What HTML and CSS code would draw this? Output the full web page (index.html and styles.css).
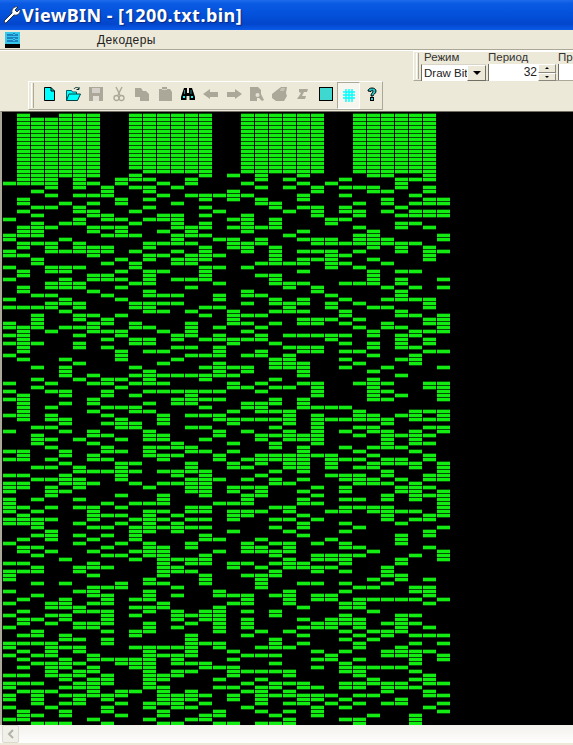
FILE: index.html
```html
<!DOCTYPE html>
<html lang="ru">
<head>
    <meta charset="UTF-8">
    <title>ViewBIN - [1200.txt.bin]</title>
    <link rel="stylesheet" href="styles.css">
</head>
<body>

<div class="titlebar">
    <svg class="app-icon" width="20" height="20" viewBox="0 0 20 20">
        <path d="M3 18 L2 16 L10 8 C9 4 12 1 16 2 L13 5 L15 7 L18 4 C19 8 16 11 12 10 L4 18 Z" fill="#fff" stroke="#26324a" stroke-width="1"/>
    </svg>
    <span>ViewBIN - [1200.txt.bin]</span>
</div>

<div class="menubar">
    <svg class="doc-icon" width="16" height="16" viewBox="0 0 16 16">
        <rect x="0" y="0" width="15" height="12" fill="#35c8e8"/>
        <rect x="0" y="12" width="15" height="4" fill="#000"/>
        <path d="M2 3 H8 M2 6 H8 M2 9 H8 M10 3 H13 M10 6 H13 M10 9 H13" stroke="#0a3a9a" stroke-width="1"/>
        <path d="M9 1 V11" stroke="#0a3a9a" stroke-width="1" stroke-dasharray="1 1"/>
    </svg>
    <a class="menu-item" href="#">Декодеры</a>
</div>

<div class="rebar">
    <div class="rebar-row rebar-row-right">
        <div class="band options-band">
            <div class="grip"></div>
            <div class="field mode-field">
                <label>Режим</label>
                <div class="combo">
                    <span class="combo-text">Draw Bit</span>
                    <span class="combo-btn"><i class="arrow-down"></i></span>
                </div>
            </div>
            <div class="field period-field">
                <label>Период</label>
                <div class="spin">
                    <span class="spin-value">32</span>
                    <span class="spin-btns">
                        <span class="spin-btn"><i class="tiny-up"></i></span>
                        <span class="spin-btn"><i class="tiny-down"></i></span>
                    </span>
                </div>
            </div>
            <div class="field next-field">
                <label>Пропуск</label>
                <div class="spin"></div>
            </div>
        </div>
    </div>
    <div class="rebar-row">
        <div class="band tools-band">
            <div class="grip"></div>

            <!-- new -->
            <button class="tool"><svg width="16" height="16" viewBox="0 0 16 16">
                <path d="M2.5 1.5 H9 L12.5 5 V14.5 H2.5 Z" fill="#0ff" stroke="#000"/>
                <path d="M9 1.5 V5 H12.5" fill="none" stroke="#000"/>
            </svg></button>
            <!-- open -->
            <button class="tool"><svg width="16" height="16" viewBox="0 0 16 16">
                <path d="M1.5 14.5 V4.5 H6.5 L7.5 6 H11.5 V8" fill="#0ff" stroke="#006060"/>
                <path d="M1.5 14.5 L4 8 H15.5 L12.5 14.5 Z" fill="#0ff" stroke="#004040"/>
                <path d="M9 3 C10 1 13 1 14 3 M14 1 V3.5 H11.5" fill="none" stroke="#003030"/>
            </svg></button>
            <!-- save -->
            <button class="tool"><svg width="16" height="16" viewBox="0 0 16 16">
                <path d="M1 1 H15 V15 H1 Z" fill="#aca899"/>
                <rect x="4" y="2" width="8" height="5" fill="#d4d0c8"/>
                <rect x="5" y="10" width="6" height="5" fill="#e2dfd4"/>
            </svg></button>
            <!-- cut -->
            <button class="tool"><svg width="16" height="16" viewBox="0 0 16 16">
                <path d="M5 1 L9 9 M11 1 L7 9" stroke="#aca899" stroke-width="1.4" fill="none"/>
                <circle cx="5.5" cy="12" r="2.5" fill="none" stroke="#aca899" stroke-width="1.3"/>
                <circle cx="10.5" cy="12" r="2.5" fill="none" stroke="#aca899" stroke-width="1.3"/>
            </svg></button>
            <!-- copy -->
            <button class="tool"><svg width="16" height="16" viewBox="0 0 16 16">
                <path d="M1 2 H7 L9 5 H12 L15 8 V15 H6 V11 H1 Z" fill="#aca899"/>
            </svg></button>
            <!-- paste -->
            <button class="tool"><svg width="16" height="16" viewBox="0 0 16 16">
                <path d="M2 3 H5 V1 H10 V3 H13 L15 6 V15 H2 Z" fill="#aca899"/>
                <rect x="5" y="3" width="5" height="1" fill="#d8d5c8"/>
            </svg></button>
            <!-- find -->
            <button class="tool"><svg width="16" height="16" viewBox="0 0 16 16">
                <path d="M4 2 H7 V7 H9 V2 H12 L15 11 V14 H9.5 V10 H6.5 V14 H1 V11 Z" fill="#000"/>
                <path d="M3 10 H5 V12 H3 Z M11 10 H13 V12 H11 Z" fill="#0ff"/>
                <path d="M4.5 4 V8 M11 4 V8" stroke="#2a8a8a"/>
            </svg></button>
            <!-- back -->
            <button class="tool"><svg width="16" height="16" viewBox="0 0 16 16">
                <path d="M0 8 L7 3 V6 H15 V11 H7 V13 Z" fill="#aca899"/>
            </svg></button>
            <!-- forward -->
            <button class="tool"><svg width="16" height="16" viewBox="0 0 16 16">
                <path d="M16 8 L9 3 V6 H1 V11 H9 V13 Z" fill="#aca899"/>
            </svg></button>
            <!-- preview -->
            <button class="tool"><svg width="16" height="16" viewBox="0 0 16 16">
                <path d="M1 1 H9 L12 4 V8 L15 14 L13 15 L10 12 H8 V15 H1 Z" fill="#aca899"/>
                <circle cx="8.5" cy="9" r="2" fill="#e6e3d6"/>
            </svg></button>
            <!-- print -->
            <button class="tool"><svg width="16" height="16" viewBox="0 0 16 16">
                <path d="M5 4 L9 1 H15 L14 7 L15 10 L12 15 H4 L0 12 V8 Z" fill="#aca899"/>
                <path d="M9 2 H13 L12 5 H8 Z" fill="#c6c3b4"/>
            </svg></button>
            <!-- sum -->
            <button class="tool"><svg width="16" height="16" viewBox="0 0 16 16">
                <path d="M4 3 H13 L12 6 H9 L7 10 H11 L10 13 H2 L6 7 L4 6 Z" fill="#aca899"/>
            </svg></button>
            <!-- fill -->
            <button class="tool"><svg width="16" height="16" viewBox="0 0 16 16">
                <rect x="1.5" y="1.5" width="13" height="13" fill="#3fd8d0" stroke="#000"/>
            </svg></button>
            <!-- grid, pressed -->
            <button class="tool tool-on"><svg width="16" height="16" viewBox="0 0 16 16">
                <path d="M5 2 V15 M8 2 V15 M11 2 V15 M2 5 H14 M2 8 H14 M2 11 H14" stroke="#0ff" stroke-width="1.4"/>
            </svg></button>
            <!-- help -->
            <button class="tool"><svg width="16" height="16" viewBox="0 0 16 16">
                <path d="M4 5 C4 1 12 1 12 5 C12 8 9 8 9 10 H7 C7 7 9 7 9 5 C9 4 7 4 7 5.5 Z" fill="#2cc" stroke="#000"/>
                <rect x="6.5" y="11.5" width="3" height="3" fill="#2cc" stroke="#000"/>
            </svg></button>
        </div>
    </div>
</div>

<div class="view">
    <canvas id="bits" width="571" height="613"></canvas>
</div>

<div class="hscroll">
    <div class="hscroll-btn"><svg width="10" height="12" viewBox="0 0 10 12">
        <path d="M7 2 L3 6 L7 10" fill="none" stroke="#b4b2a8" stroke-width="2"/>
    </svg></div>
</div>
<div class="bottom-strip"></div>

<script src="viewbin.js"></script>
</body>
</html>
```

FILE: styles.css
```css
* {
    box-sizing: border-box;
}

body {
    margin: 0;
    width: 573px;
    height: 745px;
    overflow: hidden;
    display: flex;
    flex-direction: column;
    background-color: #ece9d8;
    font-family: "Liberation Sans", Arial, sans-serif;
    font-size: 12px;
    color: #222;
}

.titlebar {
    height: 30px;
    flex: none;
    display: flex;
    align-items: center;
    padding-left: 2px;
    background: linear-gradient(to bottom, #1e6cec 0%, #0a5ae2 12%, #0452dc 45%, #0346cc 80%, #0a5ae8 100%);
    color: white;
    font-family: "Noto Sans", sans-serif;
    font-size: 18px;
    font-weight: bold;
    letter-spacing: 0.45px;
    text-shadow: 1px 1px 1px #0a2a80;
}

.menubar {
    height: 21px;
    flex: none;
    display: flex;
    align-items: center;
    padding-left: 5px;
    border-bottom: 1px solid #fff;
    box-shadow: inset 0 -1px 0 #aca899;
}

.menu-item {
    margin-left: 76px;
    color: #222;
    text-decoration: none;
    font-size: 12px;
    letter-spacing: 0.4px;
}

.rebar {
    height: 60px;
    flex: none;
    display: flex;
    flex-direction: column;
    overflow: hidden;
}

.rebar-row {
    height: 30px;
    display: flex;
    padding-left: 28px;
}

.rebar-row-right {
    padding-left: 413px;
}

.band {
    display: flex;
    border-top: 1px solid #fff;
    border-left: 1px solid #fff;
    border-bottom: 1px solid #aca899;
    border-right: 1px solid #aca899;
}

.grip {
    width: 3px;
    flex: none;
    margin: 1px 0 1px 2px;
    background-color: #ece9d8;
    border-left: 1px solid #fff;
    border-right: 1px solid #aca899;
}

.options-band {
    width: 190px;
    flex: none;
    gap: 2px;
}

.field {
    display: flex;
    flex-direction: column;
    flex: none;
}

.field label {
    height: 11px;
    line-height: 11px;
    font-size: 11.5px;
    color: #333;
}

.mode-field {
    width: 65px;
}

.mode-field label {
    padding-left: 3px;
}

.period-field {
    width: 68px;
}

.next-field {
    width: 40px;
}

.combo {
    margin-top: 1px;
    height: 18px;
    display: flex;
    background-color: white;
    border-left: 1px solid #716f64;
    border-top: 1px solid #d8d5c8;
}

.combo-text {
    flex: 1;
    padding-left: 2px;
    line-height: 16px;
    font-size: 11.5px;
    white-space: nowrap;
    overflow: hidden;
}

.combo-btn {
    width: 19px;
    flex: none;
    display: flex;
    align-items: center;
    justify-content: center;
    background-color: #ece9d8;
    border: 1px solid;
    border-color: #fff #716f64 #716f64 #fff;
}

.arrow-down {
    border-left: 4px solid transparent;
    border-right: 4px solid transparent;
    border-top: 4px solid #000;
}

.spin {
    margin-top: 1px;
    height: 18px;
    display: flex;
    justify-content: flex-end;
    background-color: white;
    border-left: 1px solid #716f64;
}

.spin-value {
    padding-right: 1px;
    line-height: 17px;
    font-size: 12px;
}

.spin-btns {
    width: 18px;
    flex: none;
    display: flex;
    flex-direction: column;
}

.spin-btn {
    flex: 1;
    display: flex;
    align-items: center;
    justify-content: center;
    background-color: #ece9d8;
    border: 1px solid;
    border-color: #fff #8a887c #8a887c #fff;
}

.tiny-up {
    border-left: 2px solid transparent;
    border-right: 2px solid transparent;
    border-bottom: 2px solid #000;
}

.tiny-down {
    border-left: 2px solid transparent;
    border-right: 2px solid transparent;
    border-top: 2px solid #000;
}

.tools-band {
    width: 355px;
    height: 29px;
}

.tools-band .grip {
    margin-right: 4px;
}

.tool {
    width: 23px;
    height: 26px;
    flex: none;
    padding: 0;
    margin: 0;
    display: flex;
    align-items: center;
    justify-content: center;
    border: 0;
    background: none;
}

.tool svg {
    margin-bottom: 2px;
}

.tool-on {
    height: 27px;
    background-color: #f6f5ee;
    border: 1px solid;
    border-color: #aca899 #fff #fff #aca899;
}

.view {
    flex: none;
    height: 614px;
    border-top: 1px solid #716f64;
    border-left: 2px solid #aca899;
    background-color: #000;
}

#bits {
    display: block;
}

.hscroll {
    height: 18px;
    flex: none;
    padding-left: 2px;
    background: linear-gradient(to bottom, #f3f1ec, #fefefe);
}

.hscroll-btn {
    width: 17px;
    height: 18px;
    display: flex;
    align-items: center;
    justify-content: center;
    background-color: #f0efe8;
    border: 1px solid #dcdad0;
    border-radius: 2px;
}

.bottom-strip {
    flex: 1;
    background-color: #ece9d8;
}
```

FILE: viewbin.js
```js
// one line per row, the numbers are the columns that are set
var FULL = "1 2 3 4 5 6 9 10 11 12 13 14 17 18 19 20 21 22 25 26 27 28 29 30";

var rows = [
    "1 4 5 6 9 10 11 12 13 14 17 18 19 20 21 22 25 26 27 28 29 30",
    FULL, FULL, FULL, FULL, FULL, FULL, FULL, FULL, FULL, FULL, FULL, FULL, FULL,
    "1 2 3 4 5 6 10 11 12 13 14 17 18 19 20 21 22 25 26 27 28 29 30",
    "1 2 3 4 5 6 9 14 16 18 21 26 27 30",
    "1 2 3 5 8 9 10 13 18 20 24 28 29 30",
    "0 1 2 3 5 6 8 11 13 17 21 23 28",
    "3 5 7 9 10 12 18 20 22 24 25 26 28 30",
    "2 7 10 16 22 26 27 30",
    "3 5 6 7 11 13 14 15 16 17 21 24 29",
    "1 8 10 14 16 18 21 27 30 31",
    "1 4 6 8 12 18 19 25 27 29 30 31",
    "2 3 5 10 14 19 21 22 24 28",
    "1 5 6 9 15 20 22 24 25 27 29 30 31",
    "2 6 7 11 12 14 17 22 25 28 29 30 31",
    "0 5 7 8 10 11 12 16 17 19 23 24",
    "2 4 5 9 12 14 17 19 23 28 29",
    "1 2 3 6 7 8 12 13 14 16 17 18 19 25 28 30",
    "1 2 6 8 11 13 17 21 26",
    "0 1 2 7 8 9 12 13 14 20 25 26 31",
    "0 4 12 15 16 18 21 22 23 25 26 27 31",
    "1 2 3 5 10 11 12 13 16 17 18 22 23 24 25 26 27 28 29",
    "1 3 5 6 7 10 14 16 17 19 26 28 30",
    "0 3 4 5 6 7 9 12 14 17 19 21 22 23 25 28 30 31",
    "0 1 6 10 11 13 14 15 19 23 24 30",
    "2 8 10 12 13 14 19 21 22 23 26 30",
    "2 7 9 12 13 18 19 20 21 23 24 27",
    "0 3 4 5 9 14 15 17 23 25",
    "1 3 4 8 10 11 14 21 26 28 29",
    "1 6 7 10 14 18 19 26",
    "0 4 6 7 8 10 12 13 14 19 26 28 31",

    "3 4 5 9 10 15 19 20 21 24 25 26 28",
    "1 3 4 5 8 13 20 22 27 29 31",
    "1 6 10 17 22 28",
    "2 3 7 10 11 12 15 17 18 23 28",
    "0 4 8 15 19 21 24 27 28 29 30",
    "3 4 5 9 10 11 12 17 19 20 21 23 25 30",
    "0 1 2 3 5 9 10 14 15 20 23 26 27 30",
    "4 10 11 13 16 19 20 21 24 28",
    "2 5 6 8 14 16 17 18 24 28 29 31",
    "2 5 7 16 21 22 23 25 30 31",
    "0 2 6 7 9 13 16 17 19 21 22 24 27 30 31",
    "0 1 2 4 5 6 9 10 13 15 18 25 27 28 31",
    "1 3 6 7 8 11 13 17 26 29 30 31",
    "0 1 5 8 12 13 15 18 20 21 22 23 24 26 28 29",
    "1 7 9 10 12 14 15 16 17 18 23 28 30",
    "0 1 2 5 9 10 16 19 24 26 28 30",
    "1 5 7 12 13 15 20 21 22 26 28 29",
    "1 8 10 11 15 18 21 22 24 25 30 31",
    "0 8 13 14 15 17 18 20 26 29",
    "1 4 8 12 19 20 24 28 29",
    "5 11 15 19 20 21 25 29",
    "2 4 9 14 15 16 17 19 20 21 24 27 31",
    "4 10 15 17 21 26",
    "4 6 9 10 11 12 13 14 15 16 21 28",
    "2 5 7 8 10 14 19 26",
    "0 3 6 7 9 10 11 16 18 21 22 25 26 27 30 31",
    "2 8 16 17 19 20 22 26 30 31",
    "0 3 4 7 10 11 12 13 14 15 18 22 26 27 31",

    "1 4 7 9 13 22 26 28 31",
    "0 1 6 12 13 14 15 19 21 26 27 31",
    "1 4 6 10 12 13 17 18 19 21",
    "1 3 7 8 9 14 17 18 21 22 23 24",
    "1 6 9 10 16 18 19 20 25 29 30 31",
    "0 1 3 7 11 13 14 15 20 22 25 26 28 29 31",
    "1 3 4 8 11 15 16 17 18 19 20 22 23 24 25 26 27 29 30 31",
    "4 7 8 9 11 16 20 22 27",
    "2 3 8 9 13 14 19 22 25 26 30 31",
    "0 4 6 10 15 17 20 22 24 26 27 29 31",
    "2 6 7 10 11 15 18 19 20 21 22 25 27 28 29 30",
    "2 3 5 8 10 11 14 18 20 21 22 27 29",
    "2 6 12 16 19 22 27 29 30",
    "3 7 10 11 12 13 19 21 24 26 27 28",
    "0 1 4 7 8 10 13 14 16 21 25 29",
    "1 4 6 10 11 12 15 18 19 20 21 22 23 26 30",
    "0 1 3 6 7 11 15 17 18 19 20 21 23 24 25 27 28 30",
    "4 8 9 13 16 18 20 21 23 26 27 28 29 31",
    "2 3 5 8 13 16 17 20 21 23 25 26 29 31",
    "5 6 7 8 9 11 12 13 14 19 21 27 31",
    "0 1 4 8 12 14 18 23 24 25 27 30 31",
    "2 3 4 5 8 13 14 15 17 19 21 24 25 26 28 30 31",
    "0 1 4 5 6 9 11 12 13 14 19 20 25 26 27 29",
    "0 1 3 5 10 13 14 16 17 18 22 24 28 29 30",
    "0 3 4 13 14 16 18 21 24 28 29 31",
    "3 8 11 14 17 18 22 27 29 30 31",
    "0 2 5 11 17 21 24 25 27 29 31",
    "0 7 9 10 11 15 16 17 21 22 31",

    "0 1 3 5 6 8 13 14 19 20 24 25 26 27 31",
    "0 2 6 10 11 13 14 16 17 18 20 23 24 26 27 28 29 31",
    "1 6 7 8 10 12 16 17 21 27 30 31",
    "0 1 2 3 6 9 10 11 13 14 16 19 20 22 27 29 30",
    "0 1 2 5 8 10 12 21 24 28",
    "2 6 7 9 10 11 12 13 14 19 21 25 31",
    "3 9 10 12 16 20 24 30",
    "2 3 5 7 9 14 21 28 30",
    "1 3 6 9 14 15 18 23 28",
    "0 5 8 10 13 17 19 20 22 24 28",
    "1 2 7 10 11 13 17 18 20 24 25 30",
    "1 3 6 9 10 11 15 17 18 19 20 26 31",
    "2 7 8 10 11 14 19 22 23 24 25 29 31",
    "4 9 11 12 13 14 20 22 23 24 28 31",
    "0 1 6 11 13 14 16 17 19 20 21 24 28",
    "2 5 6 7 11 12 16 18 20 21 22 23 27",
    "0 1 2 5 11 12 13 19 22 24 27",
    "0 6 11 14 17 18 19 27 28",
    "0 10 14 18 26 28 30",
    "2 4 8 10 11 14 18 21 22 24 27",
    "6 7 8 12 18 25 26 29 30",
    "0 5 6 10 15 20 24 29 30",
    "2 6 7 10 12 15 16 17 19 20 22 23 30",
    "1 4 7 9 10 17 20 22 23 25 26 27 28 29 31",
    "0 3 4 6 7 11 16 17 20 24 25 30",
    "3 4 5 9 10 11 15 21 24 25",
    "1 5 6 7 10 12 14 15 17 19 26",
    "0 3 4 7 9 12 13 14 15 19 24 28 29",

    "1 2 4 7 12 14 15 17 21 23 24 25 28",
    "1 3 5 6 7 10 13 15 17 22 23 24 25 27 28 29",
    "0 5 6 10 12 15 17 21 22 23 25 28 30",
    "2 7 9 10 15 18 20 24 26 27 28",
    "1 2 4 9 13 17 21 25 27 29 30 31",
    "4 5 7 13 19 24 26",
    "0 1 2 3 7 13 14 15 19 21 25 29 31",
    "0 3 4 5 9 10 11 12 13 15 18 19 20 25 28",
    "1 3 5 10 13 16 22 24 27 28 29 30",
    "0 2 3 6 10 11 12 13 17 18 19 23 27 28 29 31",
    "1 4 6 7 8 9 10 12 16 22 23 25 29 31",
    "2 3 4 5 8 9 10 12 13 14 19 24 29",
    "1 3 4 6 9 10 14 15 16 22 24 25 26 27 28",
    "3 5 6 10 12 13 16 17 18 19 20 24 25 29",
    "0 1 3 4 5 7 10 11 12 16 20 25 30",
    "4 6 7 10 11 15 18 26 29 30",
    "0 1 2 5 6 7 10 17 19 20 21 24 25 26 27 28 30 31",
    "0 4 5 6 10 11 15 16 18 19 21 22 24 25 27 28 29",
    "1 2 3 6 8 9 11 13 17 18 20 27 30",
    "0 2 4 5 6 7 8 11 12 13 14 16 18 19 20 21 22 23 25 26 30 31",
    "0 2 5 7 11 12 13 16 18 21 22 24 28",
    "2 4 5 8 10 11 12 14 18 20 21 23 25 27 28 31",
    "0 3 7 10 12 13 17 22 24 30",
    "1 4 7 11 15 18 20 22 31",
    "1 2 4 8 11 14 15 19 22 26 29",
    "0 1 6 10 13 14 20 24 25 29",
    "2 3 4 7 11 12 15 16 18 19 20 25 29"
];

var ctx = document.getElementById("bits").getContext("2d");

function drawBits(color, grow) {
    ctx.fillStyle = color;
    for (var r = 0; r < rows.length; r++) {
        var cols = rows[r].split(" ");
        for (var i = 0; i < cols.length; i++) {
            ctx.fillRect(1 + 14 * Number(cols[i]), 2 + 4 * r - grow, 13, 3 + grow * 2);
        }
    }
}

// dark edge first, the bar on top of it
drawBits("#064a06", 1);
drawBits("#12ec12", 0);
```
